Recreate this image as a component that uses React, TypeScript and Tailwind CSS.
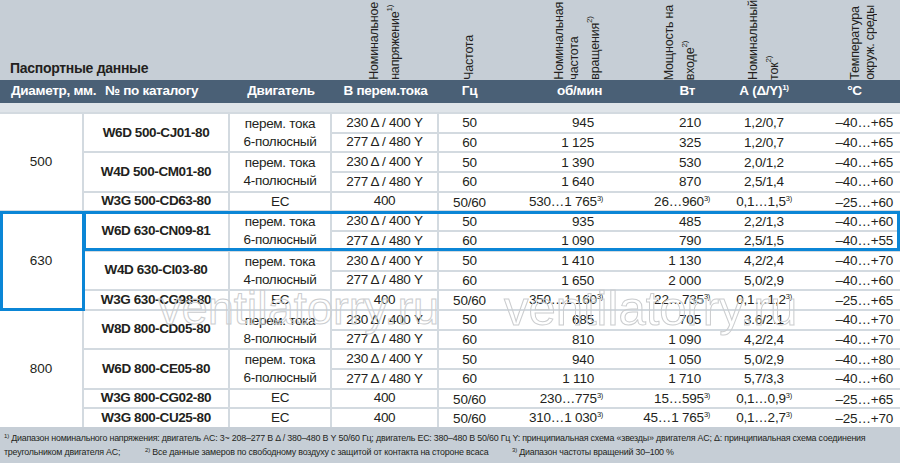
import React from "react";

type Val = string | [string, string];
type Row = { v: string; f: string; rpm: Val; p: Val; a: Val; t: string };
type Model = { cat: string; motor: [string, string] | string; rows: Row[] };
type Group = { d: string; models: Model[] };

const ac1 = "230 Δ / 400 Y";
const ac2 = "277 Δ / 480 Y";

const groups: Group[] = [
  {
    d: "500",
    models: [
      {
        cat: "W6D 500-CJ01-80",
        motor: ["перем. тока", "6-полюсный"],
        rows: [
          { v: ac1, f: "50", rpm: "945", p: "210", a: "1,2/0,7", t: "–40…+65" },
          { v: ac2, f: "60", rpm: "1 125", p: "325", a: "1,2/0,7", t: "–40…+65" },
        ],
      },
      {
        cat: "W4D 500-CM01-80",
        motor: ["перем. тока", "4-полюсный"],
        rows: [
          { v: ac1, f: "50", rpm: "1 390", p: "530", a: "2,0/1,2", t: "–40…+65" },
          { v: ac2, f: "60", rpm: "1 640", p: "870", a: "2,5/1,4", t: "–40…+60" },
        ],
      },
      {
        cat: "W3G 500-CD63-80",
        motor: "EC",
        rows: [
          { v: "400", f: "50/60", rpm: ["530…1 765", "3)"], p: ["26…960", "3)"], a: ["0,1…1,5", "3)"], t: "–25…+60" },
        ],
      },
    ],
  },
  {
    d: "630",
    models: [
      {
        cat: "W6D 630-CN09-81",
        motor: ["перем. тока", "6-полюсный"],
        rows: [
          { v: ac1, f: "50", rpm: "935", p: "485", a: "2,2/1,3", t: "–40…+60" },
          { v: ac2, f: "60", rpm: "1 090", p: "790", a: "2,5/1,5", t: "–40…+55" },
        ],
      },
      {
        cat: "W4D 630-CI03-80",
        motor: ["перем. тока", "4-полюсный"],
        rows: [
          { v: ac1, f: "50", rpm: "1 410", p: "1 130", a: "4,2/2,4", t: "–40…+70" },
          { v: ac2, f: "60", rpm: "1 650", p: "2 000", a: "5,0/2,9", t: "–40…+60" },
        ],
      },
      {
        cat: "W3G 630-CG98-80",
        motor: "EC",
        rows: [
          { v: "400", f: "50/60", rpm: ["350…1 160", "3)"], p: ["22…735", "3)"], a: ["0,1…1,2", "3)"], t: "–25…+65" },
        ],
      },
    ],
  },
  {
    d: "800",
    models: [
      {
        cat: "W8D 800-CD05-80",
        motor: ["перем. тока", "8-полюсный"],
        rows: [
          { v: ac1, f: "50", rpm: "685", p: "705", a: "3.6/2.1", t: "–40…+70" },
          { v: ac2, f: "60", rpm: "810", p: "1 090", a: "4,2/2,4", t: "–40…+70" },
        ],
      },
      {
        cat: "W6D 800-CE05-80",
        motor: ["перем. тока", "6-полюсный"],
        rows: [
          { v: ac1, f: "50", rpm: "940", p: "1 050", a: "5,0/2,9", t: "–40…+80" },
          { v: ac2, f: "60", rpm: "1 110", p: "1 710", a: "5,7/3,3", t: "–40…+60" },
        ],
      },
      {
        cat: "W3G 800-CG02-80",
        motor: "EC",
        rows: [
          { v: "400", f: "50/60", rpm: ["230…775", "3)"], p: ["15…595", "3)"], a: ["0,1…0,9", "3)"], t: "–25…+65" },
        ],
      },
      {
        cat: "W3G 800-CU25-80",
        motor: "EC",
        rows: [
          { v: "400", f: "50/60", rpm: ["310…1 030", "3)"], p: ["45…1 765", "3)"], a: ["0,1…2,7", "3)"], t: "–25…+70" },
        ],
      },
    ],
  },
];

const ROW_START = [
  "row-start-1", "row-start-2", "row-start-3", "row-start-4",
  "row-start-5", "row-start-6", "row-start-7", "row-start-8",
  "row-start-9", "row-start-10", "row-start-11", "row-start-12",
  "row-start-13", "row-start-14", "row-start-15", "row-start-16",
];
const ROW_SPAN: Record<number, string> = {
  1: "row-span-1",
  2: "row-span-2",
  5: "row-span-5",
  6: "row-span-6",
};

const COLS = "grid-cols-[84px_146px_102px_107px_61px_117px_102px_90px_91px]";

function Sup({ children, hang }: { children: React.ReactNode; hang?: boolean }) {
  return (
    <span className={"relative -top-[5px] text-[7.5px] tracking-[-0.3px] " + (hang ? "-mr-[9px]" : "")}>
      {children}
    </span>
  );
}

function V({ val, hang }: { val: Val; hang?: boolean }) {
  if (typeof val === "string") return <>{val}</>;
  return (
    <>
      {val[0]}
      <Sup hang={hang}>{val[1]}</Sup>
    </>
  );
}

function Rotated({ children }: { children: React.ReactNode }) {
  return (
    <div className="[writing-mode:vertical-rl] rotate-180 whitespace-nowrap text-[12.5px] leading-[15px] tracking-[-0.2px]">
      {children}
    </div>
  );
}

function Body() {
  const cells: React.ReactNode[] = [];
  let r = 0;
  groups.forEach((g) => {
    const gRows = g.models.reduce((n, m) => n + m.rows.length, 0);
    cells.push(
      <div
        key={"d" + g.d}
        className={"col-start-1 flex items-center justify-center bg-white text-[13.5px] " + ROW_START[r] + " " + ROW_SPAN[gRows]}
      >
        {g.d}
      </div>,
    );
    g.models.forEach((m) => {
      const span = ROW_SPAN[m.rows.length];
      cells.push(
        <div
          key={"c" + m.cat}
          className={"col-start-2 flex items-center justify-center bg-white text-[13.5px] font-bold tracking-[-0.4px] " + ROW_START[r] + " " + span}
        >
          {m.cat}
        </div>,
      );
      cells.push(
        <div
          key={"m" + m.cat}
          className={"col-start-3 flex flex-col items-center justify-center bg-white text-[13.5px] leading-[18px] tracking-[-0.3px] " + ROW_START[r] + " " + span}
        >
          {typeof m.motor === "string" ? (
            m.motor
          ) : (
            <>
              <span>{m.motor[0]}</span>
              <span>{m.motor[1]}</span>
            </>
          )}
        </div>,
      );
      m.rows.forEach((row, i) => {
        const rs = ROW_START[r + i];
        cells.push(
          <div
            key={"v" + m.cat + i}
            className={"col-start-4 row-span-1 flex items-center justify-center bg-white text-[13.5px] tracking-[-0.3px] " + rs}
          >
            {row.v}
          </div>,
        );
        cells.push(
          <div
            key={"x" + m.cat + i}
            className={"col-start-5 row-span-1 grid grid-cols-[61px_117px_102px_90px_91px] items-center bg-white text-[13.5px] leading-[17px] tracking-[-0.2px] whitespace-nowrap " + rs}
          >
            <div className="text-center">{row.f}</div>
            <div className="pr-[23px] text-right">
              <V val={row.rpm} hang />
            </div>
            <div className="pr-[18px] text-right">
              <V val={row.p} hang />
            </div>
            <div className="text-center">
              <V val={row.a} />
            </div>
            <div className="pr-[7px] text-right">{row.t}</div>
          </div>,
        );
      });
      r += m.rows.length;
    });
  });

  return (
    <div className="relative">
      <div className="grid grid-cols-[82px_144px_100px_105px_461px] grid-rows-[repeat(16,17.7px)] gap-[2px] bg-[#d3dae0] pt-[2px]">
        {cells}
        {/* highlighted group */}
        <div className="pointer-events-none z-10 col-start-1 row-start-6 row-span-5 -mt-[1px] -mr-[3px] -mb-[2px] border-[3px] border-[#0b86d6]" />
        <div className="pointer-events-none z-10 col-start-2 col-span-4 row-start-6 row-span-2 -mt-[1px] -ml-[1px] -mb-[1px] border-[3px] border-[#0b86d6]" />
      </div>
      <div className="pointer-events-none absolute left-[158px] top-[172px] z-20 text-[47px] leading-none text-transparent [-webkit-text-stroke:1px_#cbcdcf]">
        ventilatorry.ru
      </div>
      <div className="pointer-events-none absolute left-[504px] top-[172px] z-20 text-[49px] leading-none text-transparent [-webkit-text-stroke:1px_#cbcdcf]">
        ventilatorry.ru
      </div>
    </div>
  );
}

export default function App() {
  return (
    <div className="h-[463px] w-[900px] overflow-hidden bg-white font-['Liberation_Sans',Arial,sans-serif] text-[#231f20]">
      <div className={"grid h-[80px] overflow-hidden bg-[#c6ced6] " + COLS}>
        <div className="col-span-3 flex items-end whitespace-nowrap pb-[4px] pl-[10px] text-[14px] font-bold leading-[20px] tracking-[-0.3px]">
          Паспортные данные
        </div>
        <div className="flex items-end justify-center pb-[2px]">
          <Rotated>
            Номинальное
            <br />
            напряжение<span className="align-super text-[8px]">1)</span>
          </Rotated>
        </div>
        <div className="flex items-end justify-center pb-[2px]">
          <Rotated>Частота</Rotated>
        </div>
        <div className="flex items-end justify-end pb-[2px] pr-[14px]">
          <Rotated>
            Номинальная
            <br />
            частота
            <br />
            вращения<span className="align-super text-[8px]">2)</span>
          </Rotated>
        </div>
        <div className="flex items-end justify-end pb-[2px] pr-[21px]">
          <Rotated>
            Мощность на
            <br />
            входе<span className="align-super text-[8px]">2)</span>
          </Rotated>
        </div>
        <div className="flex items-end justify-center pb-[2px]">
          <Rotated>
            Номинальный
            <br />
            ток<span className="align-super text-[8px]">2)</span>
          </Rotated>
        </div>
        <div className="flex items-end justify-center pb-[2px] pl-[17px]">
          <Rotated>
            Температура
            <br />
            окруж. среды
          </Rotated>
        </div>
      </div>

      <div className={"grid h-[23px] items-center whitespace-nowrap bg-[#4a6076] text-[13.5px] font-bold tracking-[-0.3px] text-white " + COLS}>
        <div className="col-span-2 flex pl-[11px]">
          <span className="w-[94px]">Диаметр, мм.</span>
          <span>№ по каталогу</span>
        </div>
        <div className="text-center">Двигатель</div>
        <div className="text-center">В перем.тока</div>
        <div className="text-center">Гц</div>
        <div className="pr-[15px] text-right">об/мин</div>
        <div className="pr-[24px] text-right">Вт</div>
        <div className="text-center">
          А (Δ/Y)<span className="relative -top-[5px] text-[8px]">1)</span>
        </div>
        <div className="text-center">°C</div>
      </div>

      <div className="h-[9px] bg-[#dfe4e9]" />

      <Body />

      <div className="h-[36px] whitespace-nowrap bg-[#c6ced6] px-[4px] pt-[5px] text-[8.9px] leading-[13px] tracking-[-0.2px]">
        <div>
          <span className="relative -top-[3px] text-[6px]">1)</span> Диапазон номинального напряжения: двигатель AC: 3~ 208–277 В Δ / 380–480 В Y 50/60 Гц; двигатель EC: 380–480 В 50/60 Гц Y: принципиальная схема «звезды» двигателя AC; Δ: принципиальная схема соединения
        </div>
        <div className="flex">
          <span className="w-[141px]">треугольником двигателя AC;</span>
          <span className="w-[367px]">
            <span className="relative -top-[3px] text-[6px]">2)</span> Все данные замеров по свободному воздуху с защитой от контакта на стороне всаса
          </span>
          <span>
            <span className="relative -top-[3px] text-[6px]">3)</span> Диапазон частоты вращений 30–100 %
          </span>
        </div>
      </div>
    </div>
  );
}
